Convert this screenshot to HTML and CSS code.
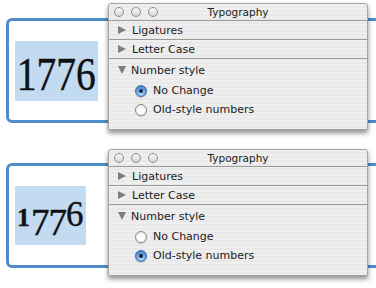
FILE: index.html
```html
<!DOCTYPE html>
<html>
<head>
<meta charset="utf-8">
<link rel="stylesheet" href="styles.css">
</head>
<body>
<div class="scene">
  <div class="box">
    <span class="sel lining"><span class="digits">1776</span></span>
  </div>
  <div class="panel">
    <div class="titlebar">
      <span class="lights"><i></i><i></i><i></i></span>
      <span class="title">Typography</span>
    </div>
    <div class="row"><span class="tri"></span>Ligatures</div>
    <div class="row"><span class="tri"></span>Letter Case</div>
    <div class="group">
      <div class="ghead"><span class="tri down"></span>Number style</div>
      <div class="opt"><span class="radio on"></span>No Change</div>
      <div class="opt"><span class="radio"></span>Old-style numbers</div>
    </div>
  </div>
</div>
<div class="scene second">
  <div class="box">
    <span class="sel oldstyle"><span class="o1">1</span><span class="o7">7</span><span class="o7">7</span><span class="o6">6</span></span>
  </div>
  <div class="panel">
    <div class="titlebar">
      <span class="lights"><i></i><i></i><i></i></span>
      <span class="title">Typography</span>
    </div>
    <div class="row"><span class="tri"></span>Ligatures</div>
    <div class="row"><span class="tri"></span>Letter Case</div>
    <div class="group">
      <div class="ghead"><span class="tri down"></span>Number style</div>
      <div class="opt"><span class="radio"></span>No Change</div>
      <div class="opt"><span class="radio on"></span>Old-style numbers</div>
    </div>
  </div>
</div>
</body>
</html>
```

FILE: styles.css
```css
html, body {
  margin: 0;
  padding: 0;
  background: #ffffff;
  overflow: hidden;
}
body {
  width: 376px;
  height: 288px;
}
.scene {
  position: relative;
  box-sizing: border-box;
  height: 146px;
  padding-top: 18px;
}
.scene.second {
  padding-top: 17px;
}
.box {
  margin: 0 -20px 0 6px;
  height: 99px;
  border: 3px solid #4f8bc9;
  border-radius: 6px;
  padding: 0 0 0 6px;
  display: flex;
  align-items: center;
}
.sel {
  display: inline-block;
  background: #c3dbf1;
  color: #111;
  font-family: "Liberation Serif", serif;
  white-space: nowrap;
  -webkit-text-stroke: 0.4px #111;
}
.lining {
  width: 83px;
  height: 60px;
  line-height: 66px;
  font-size: 47px;
  overflow: hidden;
}
.digits {
  display: inline-block;
  transform: scaleX(0.84);
  transform-origin: 0 0;
  padding-left: 2px;
}
.oldstyle {
  height: 59px;
  line-height: 56px;
  font-size: 36px;
  padding: 0 2px 0 2px;
  overflow: hidden;
}
.oldstyle span {
  line-height: 1;
}
.o1 {
  font-size: 26px;
  font-weight: bold;
  margin-right: 1px;
}
.o7 {
  font-size: 37px;
  vertical-align: -9px;
  letter-spacing: -1px;
}
.o6 {
  font-size: 35px;
}
.panel {
  position: absolute;
  left: 108px;
  top: 3px;
  width: 258px;
  height: 125px;
  border: 1px solid #a4a4a4;
  border-radius: 3px 3px 0 0;
  background: repeating-linear-gradient(#efefef 0 2px, #e9e9e9 2px 4px);
  box-shadow: 0 3px 5px rgba(0, 0, 0, 0.45);
  font-family: "DejaVu Sans", sans-serif;
  font-size: 11px;
  color: #1b1b1b;
}
.titlebar {
  height: 16px;
  display: grid;
  grid-template-columns: 1fr auto 1fr;
  align-items: center;
  border-bottom: 1px solid #9a9a9a;
}
.lights {
  display: flex;
  gap: 7px;
  padding-left: 5px;
}
.lights i {
  display: block;
  width: 8px;
  height: 8px;
  border: 1px solid #8c8c8c;
  border-radius: 50%;
  background: linear-gradient(#fafafa, #d6d6d6);
}
.title {
  font-size: 10.5px;
  color: #222;
}
.row {
  height: 18px;
  border-bottom: 1px solid #9a9a9a;
  display: flex;
  align-items: center;
  padding-left: 9px;
}
.tri {
  width: 0;
  height: 0;
  border-left: 8px solid #7d7d7d;
  border-top: 4.5px solid transparent;
  border-bottom: 4.5px solid transparent;
  margin-right: 6px;
}
.tri.down {
  border-left: 4.5px solid transparent;
  border-right: 4.5px solid transparent;
  border-top: 8px solid #7d7d7d;
  border-bottom: 0;
  margin-right: 5px;
}
.group {
  padding-bottom: 10px;
}
.ghead {
  height: 22px;
  display: flex;
  align-items: center;
  padding-left: 9px;
}
.opt {
  height: 19px;
  display: flex;
  align-items: center;
  padding-left: 26px;
}
.radio {
  width: 10px;
  height: 10px;
  border: 1px solid #8a8a8a;
  border-radius: 50%;
  background: radial-gradient(circle at 50% 70%, #ffffff 30%, #e2e2e2 100%);
  margin-right: 6px;
  position: relative;
  box-shadow: 0 1px 1px rgba(0, 0, 0, 0.15);
}
.radio.on {
  border-color: #3d6aa5;
  background: radial-gradient(circle at 50% 75%, #b9dcfa 0%, #6fa7e3 45%, #2f6fc0 100%);
}
.radio.on::after {
  content: "";
  position: absolute;
  left: 3px;
  top: 3px;
  width: 4px;
  height: 4px;
  border-radius: 50%;
  background: #13233a;
}
```
